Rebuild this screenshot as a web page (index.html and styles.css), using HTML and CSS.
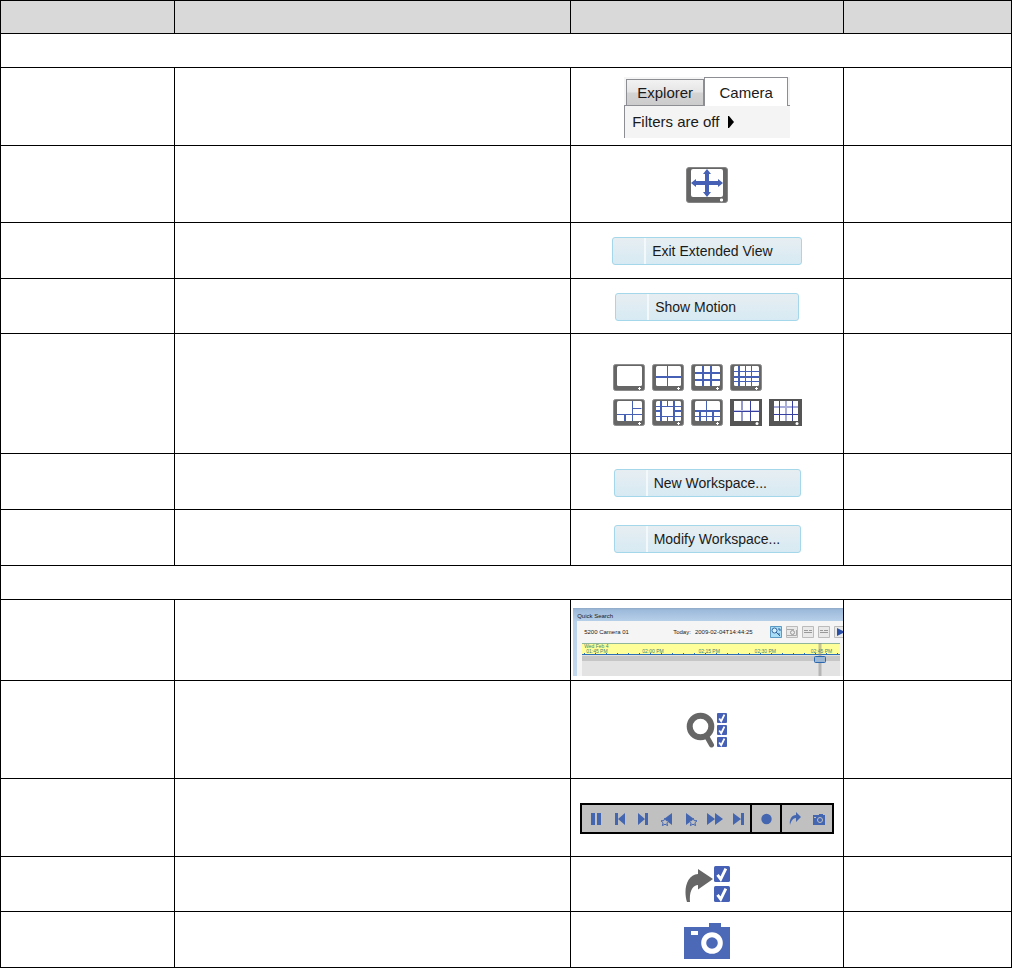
FILE: index.html
```
<!DOCTYPE html>
<html lang="en">
<head>
  <meta charset="UTF-8">
  <meta name="viewport" content="width=device-width, initial-scale=1.0">
  <title>Camera Controls</title>
  <link rel="stylesheet" href="styles.css">
</head>
<body>
  <!-- Shared icon shapes -->
  <svg class="defs" width="0" height="0" aria-hidden="true">
    <defs>
      <g id="monitor">
        <rect x="0.5" y="0.5" width="31" height="26" rx="2" fill="#666" stroke="#8c8c8c"/>
        <rect x="4" y="2" width="25" height="20" rx="1.5" fill="#fff"/>
        <path d="M25 24.500h3M26.500 23v3" stroke="#fff"/>
      </g>
      <g id="check">
        <rect width="10" height="10" rx="1" fill="#4560b4"/>
        <path d="M2.2 5.5l2 2.7L7.4 1.6" fill="none" stroke="#fff" stroke-width="1.8"/>
      </g>
    </defs>
  </svg>

  <table class="features">
    <colgroup>
      <col class="col-name">
      <col class="col-text">
      <col class="col-control">
      <col class="col-ref">
    </colgroup>
    <thead>
      <tr class="row-head"><th></th><th></th><th></th><th></th></tr>
    </thead>
    <tbody>
      <tr class="row-section"><td colspan="4"></td></tr>
      <tr class="row-78">
        <td></td><td></td>
        <td class="control">
          <div class="explorer">
            <div class="tabs">
              <button class="tab">Explorer</button>
              <button class="tab active">Camera</button>
            </div>
            <div class="filters">
              Filters are off
              <svg width="6" height="12" viewBox="0 0 6 12"><path d="M0 0h1l5 6-5 6H0z"/></svg>
            </div>
          </div>
        </td>
        <td></td>
      </tr>
      <tr class="row-77">
        <td></td><td></td>
        <td class="control">
          <svg class="icon" width="42" height="37" viewBox="0 0 42 37">
            <rect x="0.5" y="0.5" width="41" height="35" rx="2.5" fill="#666" stroke="#858585"/>
            <rect x="5" y="2" width="32" height="28" rx="2" fill="#fff"/>
            <path d="M21 2l4 5h-2v7h9v-2l5 4-5 4v-2h-9v7h2l-4 5-4-5h2v-7h-9v2l-5-4 5-4v2h9V7h-2z" fill="#4560b4"/>
            <path d="M34 33h3M35.500 31.500v3" stroke="#fff" stroke-width="2"/>
          </svg>
        </td>
        <td></td>
      </tr>
      <tr class="row-56">
        <td></td><td></td>
        <td><button class="action exit">Exit Extended View</button></td>
        <td></td>
      </tr>
      <tr class="row-55">
        <td></td><td></td>
        <td class="control"><button class="action motion">Show Motion</button></td>
        <td></td>
      </tr>
      <tr class="row-120">
        <td></td><td></td>
        <td class="control">
          <div class="layouts">
            <button aria-label="1 view"><svg width="32" height="27"><use href="#monitor"/></svg></button>
            <button aria-label="4 views"><svg width="32" height="27"><use href="#monitor"/>
              <path class="line" d="M15.5 2v20"/><path class="line thick" d="M4 13h25"/></svg></button>
            <button aria-label="9 views"><svg width="32" height="27"><use href="#monitor"/>
              <path class="line thick" d="M12 2v20M20 2v20M4 9h25M4 16h25"/></svg></button>
            <button aria-label="16 views"><svg width="32" height="27"><use href="#monitor"/>
              <path class="line" d="M15.5 2v20M21.5 2v20M4 7.5h25M4 17.5h25"/><path class="line thick" d="M9 2v20M4 13h25"/></svg></button>
            <span></span>
            <button aria-label="6 views"><svg width="32" height="27"><use href="#monitor"/>
              <path class="line" d="M19.5 2v20M19.5 9.5h9M4 15.5h25"/><path class="line thick" d="M12 16v6"/></svg></button>
            <button aria-label="13 views"><svg width="32" height="27"><use href="#monitor"/>
              <path class="line" d="M4 7.5h25M4 17.5h25M15.5 2v5M15.5 18v4"/><path class="line thick" d="M9 2v20M22 2v20M4 12h5M22 12h7"/></svg></button>
            <button aria-label="10 views"><svg width="32" height="27"><use href="#monitor"/>
              <path class="line" d="M15.5 2v20M4 17.5h25"/><path class="line thick" d="M4 12h25M9 13v9M22 13v9"/></svg></button>
            <button aria-label="6 equal views"><svg width="32" height="27">
              <rect width="32" height="27" fill="#555"/><rect x="4" y="2" width="25" height="20" fill="#fff"/>
              <path d="M12 2v20" stroke="#9398cf" stroke-width="2"/><path d="M4 11.500h25" stroke="#c3c6e6"/><path d="M20.5 2v20M4 12.500h25" stroke="#3740a0"/>
              <circle cx="27" cy="24.5" r="1.5" fill="#fff"/></svg></button>
            <button aria-label="12 views"><svg width="33" height="27">
              <rect width="33" height="27" fill="#555"/><rect x="5" y="2" width="24" height="20" fill="#fff"/>
              <path d="M17 2v20M5 8h24" stroke="#a9add9" stroke-width="2"/><path d="M10.5 2v20M23.5 2v20M5 15.5h24" stroke="#3740a0"/>
              <circle cx="28" cy="24.5" r="1.5" fill="#fff"/></svg></button>
          </div>
        </td>
        <td></td>
      </tr>
      <tr class="row-56">
        <td></td><td></td>
        <td class="control"><button class="action">New Workspace...</button></td>
        <td></td>
      </tr>
      <tr class="row-56">
        <td></td><td></td>
        <td class="control"><button class="action">Modify Workspace...</button></td>
        <td></td>
      </tr>
      <tr class="row-section"><td colspan="4"></td></tr>
      <tr class="row-81">
        <td></td><td></td>
        <td class="search-cell">
          <div class="quick-search">
            <div class="qs-title">Quick Search</div>
            <div class="qs-panel">
              <div class="qs-bar">
                <span class="qs-camera">5200 Camera 01</span>
                <span>Today:</span>
                <span class="qs-date">2009-02-04T14:44:25</span>
                <div class="qs-tools">
                  <button class="on" aria-label="Search"><svg width="12" height="12"><circle cx="4.5" cy="4.5" r="2.5" fill="#d8efff" stroke="#356a9e"/><path d="M6 6l4 4M8 3h2v2M8 8h2" fill="none" stroke="#2f64a0"/></svg></button>
                  <button aria-label="Snapshot"><svg width="12" height="12"><path d="M1 3.5h7M1 9.5h9.500V4" fill="none" stroke="#aaa"/><circle cx="6.500" cy="6.500" r="2" fill="none" stroke="#999"/></svg></button>
                  <button aria-label="Zoom out"><svg width="12" height="12"><path d="M2 4.500h4M7 4.500h3M2 6.500h8" stroke="#999"/></svg></button>
                  <button aria-label="Zoom in"><svg width="12" height="12"><path d="M2 4.500h3M6 4.500h4M2 6.500h8" stroke="#999"/></svg></button>
                  <button aria-label="Play"><svg width="12" height="12"><path d="M3 2l8 4-8 4z" fill="#2951a8"/></svg></button>
                </div>
              </div>
              <div class="timeline">
                <div class="scale">
                  <div class="day">Wed Feb 4</div>
                  <div class="times">
                    <span>01:45 PM</span><span>02:00 PM</span><span>02:15 PM</span><span>02:30 PM</span><span>02:45 PM</span>
                  </div>
                </div>
                <div class="track"></div>
                <svg class="playhead" width="12" height="33" viewBox="0 0 12 33">
                  <path d="M6 0v33" stroke="#888" stroke-opacity="0.5" stroke-width="3"/>
                  <rect x="0.5" y="13.500" width="11" height="6" rx="1" fill="#9db7d3" stroke="#2b67ad"/>
                </svg>
              </div>
            </div>
          </div>
        </td>
        <td></td>
      </tr>
      <tr class="row-98">
        <td></td><td></td>
        <td class="control">
          <svg class="icon" width="42" height="38" viewBox="0 0 42 38">
            <circle cx="14.500" cy="14.500" r="10.800" fill="none" stroke="#666" stroke-width="6"/>
            <path d="M21 25l4.500 8" stroke="#666" stroke-width="5" stroke-linecap="round"/>
            <use href="#check" x="31" y="1"/>
            <use href="#check" x="31" y="13"/>
            <use href="#check" x="31" y="25"/>
          </svg>
        </td>
        <td></td>
      </tr>
      <tr class="row-78">
        <td></td><td></td>
        <td class="control">
          <div class="player">
            <div class="group transport">
              <button aria-label="Pause"><svg viewBox="0 0 16 16"><path d="M3 2h4v12H3zM9 2h4v12H9z"/></svg></button>
              <button aria-label="Previous"><svg viewBox="0 0 16 16"><path d="M3 2h3v12H3zM13 2v12L6 8z"/></svg></button>
              <button aria-label="Next"><svg viewBox="0 0 16 16"><path d="M10 2h3v12h-3zM3 2v12l7-6z"/></svg></button>
              <button aria-label="Previous event"><svg viewBox="0 0 16 16"><path d="M13 2v12L5 8z"/><path class="star" d="M6 7l1.200 2.600 2.800.2-2.100 2 .7 2.800L6 13.200l-2.600 1.400.7-2.800-2.100-2 2.800-.2z"/></svg></button>
              <button aria-label="Next event"><svg viewBox="0 0 16 16"><path d="M3 2v12l8-6z"/><path class="star" d="M10 7l1.200 2.600 2.800.2-2.100 2 .7 2.800-2.600-1.400-2.600 1.400.7-2.800-2.100-2 2.800-.2z"/></svg></button>
              <button aria-label="Fast forward"><svg viewBox="0 0 16 16"><path d="M0 2v12l8-6zM8 2v12l8-6z"/></svg></button>
              <button aria-label="Last"><svg viewBox="0 0 16 16"><path d="M11 2h3v12h-3zM3 2v12l8-6z"/></svg></button>
            </div>
            <div class="group record">
              <button aria-label="Record"><svg viewBox="0 0 16 16"><circle cx="8.500" cy="8" r="5.200"/></svg></button>
            </div>
            <div class="group export">
              <button aria-label="Export"><svg viewBox="0 0 16 16"><path d="M3 14C2 8 5 4 9 4V1l5 5-5 5V7C6 7 4 10 3 14z"/></svg></button>
              <button aria-label="Snapshot"><svg viewBox="0 0 16 16"><path d="M2 4h6V3h4v1h2v10H2z"/><circle class="lens" cx="9" cy="9" r="2.500"/><path d="M3 6.500h2" stroke="#c0c0c0"/></svg></button>
            </div>
          </div>
        </td>
        <td></td>
      </tr>
      <tr class="row-55">
        <td></td><td></td>
        <td class="control">
          <svg class="icon" width="46" height="38" viewBox="0 0 46 38">
            <path d="M3 36C-1 23 3 9 14 8V3l15 10-15 10.500V19C9 19 5 25 6 36z" fill="#666"/>
            <g transform="translate(30 0) scale(1.600)"><use href="#check"/></g>
            <g transform="translate(30 20) scale(1.600)"><use href="#check"/></g>
          </svg>
        </td>
        <td></td>
      </tr>
      <tr class="row-56">
        <td></td><td></td>
        <td class="control">
          <svg class="icon" width="46" height="36" viewBox="0 0 46 36">
            <path d="M0 4h25V0h12v4h9v32H0z" fill="#4c69b8"/>
            <rect x="7" y="8" width="7" height="4" fill="#fff"/>
            <circle cx="28" cy="20" r="8.300" fill="none" stroke="#fff" stroke-width="5"/>
          </svg>
        </td>
        <td></td>
      </tr>
    </tbody>
  </table>
</body>
</html>
```

FILE: styles.css
```
body {
    margin: 0;
    font-family: "Liberation Sans", Arial, sans-serif;
    background-color: #ffffff;
    color: #1a1a1a;
}

.defs {
    position: absolute;
}

button {
    font-family: inherit;
    color: inherit;
    padding: 0;
    border: none;
    background: none;
    cursor: pointer;
}

/* Main table */
.features {
    width: 100%;
    table-layout: fixed;
    border-collapse: separate;
    border-spacing: 0;
    border-top: 1px solid #000000;
    border-left: 1px solid #000000;
}

.col-name { width: 17.2%; }
.col-text { width: 39.2%; }
.col-control { width: 27%; }

th,
td {
    box-sizing: border-box;
    padding: 0;
    border-right: 1px solid #000000;
    border-bottom: 1px solid #000000;
    vertical-align: middle;
}

th {
    background-color: #d9d9d9;
}

.control {
    padding-top: 2px;
}

.row-head th { height: 33px; }
.row-section td { height: 34px; }
.row-55 td { height: 55px; }
.row-56 td { height: 56px; }
.row-77 td { height: 77px; }
.row-78 td { height: 78px; }
.row-81 td { height: 81px; }
.row-98 td { height: 98px; }
.row-120 td { height: 120px; }

.icon {
    display: block;
    margin: 0 auto;
}

/* Explorer tabs */
.explorer {
    width: 166px;
    margin: 0 auto;
    font-size: 15px;
    line-height: 18px;
}

.tabs {
    display: flex;
    align-items: flex-end;
    padding-left: 2px;
    border-bottom: 1px solid #8c8e94;
    background-color: #f5f5f5;
}

.tab {
    box-sizing: border-box;
    width: 78px;
    height: 26px;
    font-size: 15px;
    border: 1px solid #8c8e94;
    border-bottom: none;
    background: linear-gradient(#f2f2f2, #e5e5e5 48%, #d4d4d4 52%, #cccccc);
}

.tab.active {
    width: 84px;
    height: 29px;
    margin: 0 0 -1px;
    background: #ffffff;
}

.filters {
    display: flex;
    align-items: center;
    gap: 9px;
    height: 32px;
    padding-left: 7px;
    border-left: 1px solid #8c8e94;
    background-color: #f4f4f4;
}

/* Light blue buttons */
.action {
    display: block;
    box-sizing: border-box;
    width: 187px;
    height: 28px;
    margin: 0 auto;
    padding-left: 39px;
    border: 1px solid #a5d7ea;
    border-radius: 3px;
    background:
        linear-gradient(#f3f8fa, #f3f8fa) 31px 0 / 2px 100% no-repeat,
        linear-gradient(#e7eef2, #d7eaf3);
    font-size: 14px;
    line-height: 18px;
    text-align: left;
}

.action.exit { width: 190px; }
.action.motion { width: 184px; }

/* View layouts */
.layouts {
    display: grid;
    grid-template-columns: repeat(5, 33px);
    justify-content: center;
    gap: 8px 6px;
}

.layouts svg {
    display: block;
}

.line {
    fill: none;
    stroke: #4560b4;
    stroke-width: 1;
}

.line.thick {
    stroke-width: 2;
}

/* Quick search */
.search-cell {
    padding-left: 2px;
}

.quick-search {
    height: 68px;
    margin-top: 4px;
    overflow: hidden;
    padding-left: 4px;
    box-sizing: border-box;
    background: linear-gradient(#8fa9c6, #9dbadb 2px, #b9d1ea 14px, #c4d8ed);
    font-size: 6px;
    line-height: 8px;
}

.qs-title {
    padding-top: 4px;
    height: 9px;
}

.qs-panel {
    height: 55px;
    padding-left: 5px;
    background-color: #f5f5f5;
}

.qs-bar {
    display: flex;
    align-items: center;
    height: 22px;
    padding-left: 2px;
    white-space: nowrap;
}

.qs-camera {
    width: 89px;
}

.qs-date {
    margin-left: 4px;
}

.qs-tools {
    display: flex;
    gap: 4px;
    margin-left: auto;
    margin-right: -3px;
}

.qs-tools button {
    box-sizing: border-box;
    width: 12px;
    height: 12px;
    border-radius: 1px;
    background-color: #e9e9e9;
    box-shadow: inset 0 0 0 1px #bbbbbb;
}

.qs-tools .on {
    background-color: #a9dcf5;
    box-shadow: inset 0 0 0 1px #5d9bc4;
}

.qs-tools svg {
    display: block;
}

.timeline {
    position: relative;
    margin-right: 3px;
}

.scale {
    box-sizing: border-box;
    height: 12px;
    border-top: 1px solid #8fb59a;
    border-bottom: 1px solid #2c6fb5;
    background:
        repeating-linear-gradient(90deg, #2c6fb5 0 1px, transparent 1px 11px) 2px 100% / 100% 1px no-repeat,
        #ffff99;
    color: #3c8577;
    font-size: 5px;
    line-height: 5px;
}

.day {
    padding-left: 2px;
}

.times {
    display: flex;
    justify-content: space-between;
    padding: 0 8px 0 4px;
}

.track {
    height: 21px;
    background: linear-gradient(#e0e0e0 1px, #c6c6c6 1px, #c6c6c6 6px, #e3e3e3 6px);
}

.playhead {
    position: absolute;
    top: 0;
    right: 14px;
}

/* Player bar */
.player {
    display: flex;
    box-sizing: border-box;
    width: 254px;
    margin: 0 auto;
    border: 2px solid #000000;
    background-color: #c0c0c0;
}

.group {
    display: flex;
    align-items: center;
    height: 27px;
}

.group + .group {
    border-left: 2px solid #000000;
}

.transport {
    flex: 1;
    padding-left: 2px;
}

.transport button {
    flex: 1;
    min-width: 0;
}

.export button {
    width: 24px;
}

.record button {
    width: 28px;
}

.export {
    padding: 0 1px;
}

.player svg {
    display: block;
    width: 16px;
    height: 16px;
    margin: 0 auto;
    fill: #4466b0;
}

.player .star {
    fill: #c0c0c0;
    stroke: #4466b0;
}

.player .lens {
    fill: #4466b0;
    stroke: #c0c0c0;
}
```
